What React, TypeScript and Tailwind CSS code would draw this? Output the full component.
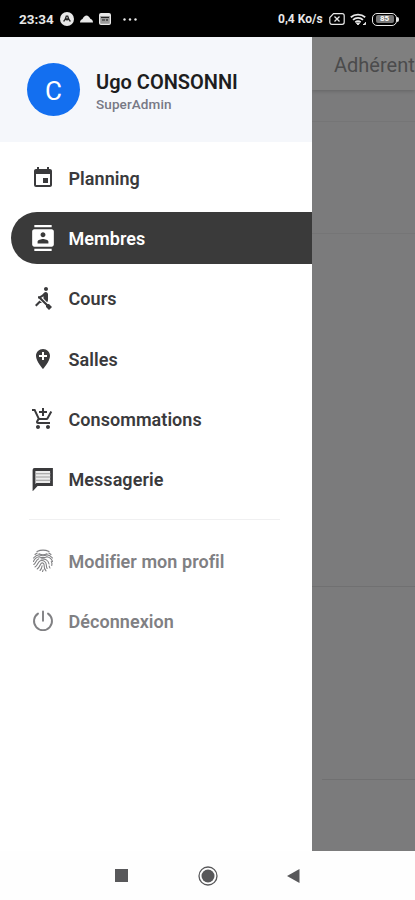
import type { IconType } from "react-icons";
import { MdAddLocation, MdAddShoppingCart, MdContacts, MdEvent, MdRowing } from "react-icons/md";
import clsx from "clsx";

type Item = {
  label: string;
  icon: IconType;
};

function MessageIcon({ className }: { className?: string }) {
  return (
    <svg className={className} viewBox="0 0 24 24">
      <path d="M3.500 2.500h17v15h-14.500l-3 3.300V3a.5.5 0 0 1 .5-.5Z" fill="#ececec" stroke="currentColor" strokeWidth="2.800" />
      <path d="M5 6.700h14.500M5 10h14.500M5 13.300h14.500" stroke="#999" strokeWidth="1.100" />
    </svg>
  );
}

function FingerprintIcon({ className }: { className?: string }) {
  return (
    <svg className={className} viewBox="0 0 24 24" fill="none" stroke="currentColor" strokeWidth="1.100" strokeLinecap="round">
      <path d="M6 2.500c3.800-1.800 8.200-1.800 12 0" />
      <path d="M4 5.500 6.200 4M8 4.800c2.500 1.200 5.500 1.200 8 0M17.800 4 20 5.500" />
      <path d="M2.500 9c1.700-2 3.700-3 5.500-3.200 2.800 1.400 5.200 1.400 8 0 1.800.2 3.800 1.200 5.500 3.200" />
      <path d="M2.500 12.500c.8-2.500 3-4.300 5.500-4.800 2.500 1.200 5.500 1.200 8 0 2.500.5 4.700 2.300 5.500 4.800" />
      <path d="M2.800 15.500c2.200-1.500 2-4.500 5-5.700M10 10c4-.8 7.500 1.500 8 5M20.300 12.500c.8 1.200.8 2.500.5 4" />
      <path d="M4 18c3-1.700 2.500-5 5.300-6.200 3.200-1 6 1 6 4.200 0 1.500.3 2.500.8 3.500M18.200 17c.1.800.4 1.500.8 2" />
      <path d="M6.200 20c2.500-1.500 2.500-4 4-5.700 1.400-1 3 .1 2.900 1.900-.1 2.300.6 4.200 1.900 5.600" />
      <path d="M9 21.500c1.200-1.100 1.900-2.800 2.100-4.800M11.500 22.500c.3-.6.5-1.100.6-1.700" />
    </svg>
  );
}

function PowerIcon({ className }: { className?: string }) {
  return (
    <svg className={className} viewBox="0 0 24 24" fill="none" stroke="currentColor" strokeWidth="1.900" strokeLinecap="round">
      <path d="M12 2.500v9.300" />
      <path d="M7 4.600a9 9 0 1 0 10 0" />
    </svg>
  );
}

const mainItems: Item[] = [
  { label: "Planning", icon: MdEvent },
  { label: "Membres", icon: MdContacts },
  { label: "Cours", icon: MdRowing },
  { label: "Salles", icon: MdAddLocation },
  { label: "Consommations", icon: MdAddShoppingCart },
  { label: "Messagerie", icon: MessageIcon },
];

const accountItems: Item[] = [
  { label: "Modifier mon profil", icon: FingerprintIcon },
  { label: "Déconnexion", icon: PowerIcon },
];

function StatusBar() {
  return (
    <div className="flex h-[37px] shrink-0 items-center justify-between bg-black pl-[19px] pr-[16px] pt-[1px] text-[#e8e8e8]">
      <div className="flex items-center">
        <span className="w-[35px] whitespace-nowrap text-[13.5px] font-bold leading-4">23:34</span>
        <svg className="ml-[6px]" width="14" height="14" viewBox="0 0 14 14">
          <circle cx="7" cy="7" r="7" fill="currentColor" />
          <path d="M3.600 9.500C5 8 6 5.500 6.300 4.200h1.400C8 5.500 9 8 10.400 9.500M5.700 8.300 7 6.800l1.300 1.500" fill="none" stroke="#222" strokeWidth="1.300" />
        </svg>
        <svg className="ml-[6px]" width="13" height="8" viewBox="0 0 13 8">
          <path d="M0 7.500C0 5.500 1.200 4.500 2.500 4 3.500 1.800 5 .5 6.500.5s3 1.300 3.800 3.300C11.800 4.200 13 5.500 13 7.500Z" fill="currentColor" />
        </svg>
        <svg className="ml-[6px]" width="12" height="12" viewBox="0 0 12 12">
          <rect x=".6" y=".6" width="10.800" height="10.800" rx="1.500" fill="#999" stroke="currentColor" strokeWidth="1.200" />
          <path d="M1 2h10" stroke="currentColor" strokeWidth="2" />
          <path d="M2 4.500h8M3 7h3M8 6v2" stroke="#222" strokeWidth="1.200" />
        </svg>
        <svg className="ml-[12px]" width="15" height="3" viewBox="0 0 15 3" fill="currentColor">
          <circle cx="1.500" cy="1.500" r="1.200" />
          <circle cx="7" cy="1.500" r="1.200" />
          <circle cx="12.500" cy="1.500" r="1.200" />
        </svg>
      </div>
      <div className="flex items-center">
        <span className="w-[46px] whitespace-nowrap text-[12px] font-bold leading-4">0,4 Ko/s</span>
        <svg className="ml-[5px]" width="16" height="12" viewBox="0 0 16 12" fill="none" stroke="currentColor">
          <path d="M4.500.7h8.700a2 2 0 0 1 2 2v6.600a2 2 0 0 1-2 2H2.800a2 2 0 0 1-2-2V4.500Z" strokeWidth="1.200" />
          <path d="m5.500 3.500 5 5m0-5-5 5" strokeWidth="1.300" />
        </svg>
        <svg className="ml-[5px]" width="17" height="13" viewBox="0 0 17 13" fill="none" stroke="currentColor">
          <path d="M.8 4.300a11 11 0 0 1 14.400 0M3 6.800a7.500 7.500 0 0 1 10 0M5.300 9.200a4.500 4.500 0 0 1 5.400 0" strokeWidth="1.800" />
          <path d="M6.500 10h3L8 12ZM13 11.500h2.500V9.200" fill="currentColor" strokeWidth="1" />
        </svg>
        <div className="ml-[5px] flex h-[13px] w-[25px] items-center justify-center rounded-[5px] border-[1.500px] border-[#e8e8e8]">
          <span className="flex h-[8px] w-[18px] items-center justify-center rounded-[2px] bg-[#777] text-[8px] font-bold leading-none text-white">
            85
          </span>
        </div>
        <span className="h-[5px] w-[2px] rounded-r bg-[#e8e8e8]" />
      </div>
    </div>
  );
}

function MenuItem({ item, active, muted }: { item: Item; active?: boolean; muted?: boolean }) {
  const Icon = item.icon;

  return (
    <a
      className={clsx(
        "ml-[11px] flex h-[52px] items-center rounded-l-full pl-[20px]",
        active ? "bg-[#3a3a3a] text-white" : muted ? "text-[#808083]" : "text-[#3a3a3c]",
      )}
    >
      <Icon className={clsx("shrink-0", active ? "size-[26px] -mx-px" : "size-6")} />
      <span className="ml-[13.5px] whitespace-nowrap pt-px text-[18px] font-semibold tracking-[0.05px]">{item.label}</span>
    </a>
  );
}

function Drawer() {
  return (
    <aside className="flex w-[312px] shrink-0 flex-col bg-white">
      <div className="flex h-[105px] items-center bg-[#f5f7fb] pl-[27px]">
        <div className="flex size-[53px] items-center justify-center rounded-full bg-[#136ff0] pt-[3px] text-[26px] text-white">
          C
        </div>
        <div className="ml-[16px] pt-[4px]">
          <h1 className="text-[20px] font-semibold leading-[24px] text-[#1d1d20]">Ugo CONSONNI</h1>
          <p className="pt-px text-[13.5px] font-medium leading-[18px] tracking-[0.1px] text-[#777985]">SuperAdmin</p>
        </div>
      </div>
      <nav className="flex flex-col gap-[8.200px] pt-[10px]">
        {mainItems.map((item) => (
          <MenuItem key={item.label} item={item} active={item.label === "Membres"} />
        ))}
      </nav>
      <hr className="ml-[29px] mr-[32px] mt-[14px] border-[#f0f0f1]" />
      <nav className="flex flex-col gap-[8px] pt-[15px]">
        {accountItems.map((item) => (
          <MenuItem key={item.label} item={item} muted />
        ))}
      </nav>
    </aside>
  );
}

function DimmedPage() {
  return (
    <main className="flex flex-1 flex-col overflow-hidden bg-[#7b7b7c]">
      <div className="z-10 h-[53px] shrink-0 bg-[#7f7f7f] pl-[22px] pt-[14px] shadow-[0_1px_4px_rgba(0,0,0,0.2)]">
        <span className="text-[20px] leading-[28px] text-[#4b4b4c]">Adhérent</span>
      </div>
      <div className="h-[32px] shrink-0 border-b border-[#757576]" />
      <div className="h-[112px] shrink-0 border-b border-[#757576]" />
      <div className="h-[353px] shrink-0 border-b border-[#707071]" />
      <div className="ml-[10px] h-[193px] shrink-0 border-b border-[#707071]" />
    </main>
  );
}

function NavigationBar() {
  return (
    <div className="flex h-[49px] shrink-0 items-center bg-[#fefefe] pl-[115px] text-[#58585a]">
      <span className="size-[13px] bg-current" />
      <svg className="ml-[70px]" width="20" height="20" viewBox="0 0 20 20">
        <circle cx="10" cy="10" r="9" fill="none" stroke="currentColor" strokeWidth="1.300" />
        <circle cx="10" cy="10" r="6.500" fill="currentColor" />
      </svg>
      <svg className="ml-[69px]" width="13" height="14" viewBox="0 0 13 14">
        <path d="M12.500 0v14L0 7Z" fill="currentColor" />
      </svg>
    </div>
  );
}

export default function App() {
  return (
    <div className="flex h-[900px] w-[415px] flex-col overflow-hidden bg-white font-['Roboto',sans-serif]">
      <StatusBar />
      <div className="flex min-h-0 flex-1">
        <Drawer />
        <DimmedPage />
      </div>
      <NavigationBar />
    </div>
  );
}
